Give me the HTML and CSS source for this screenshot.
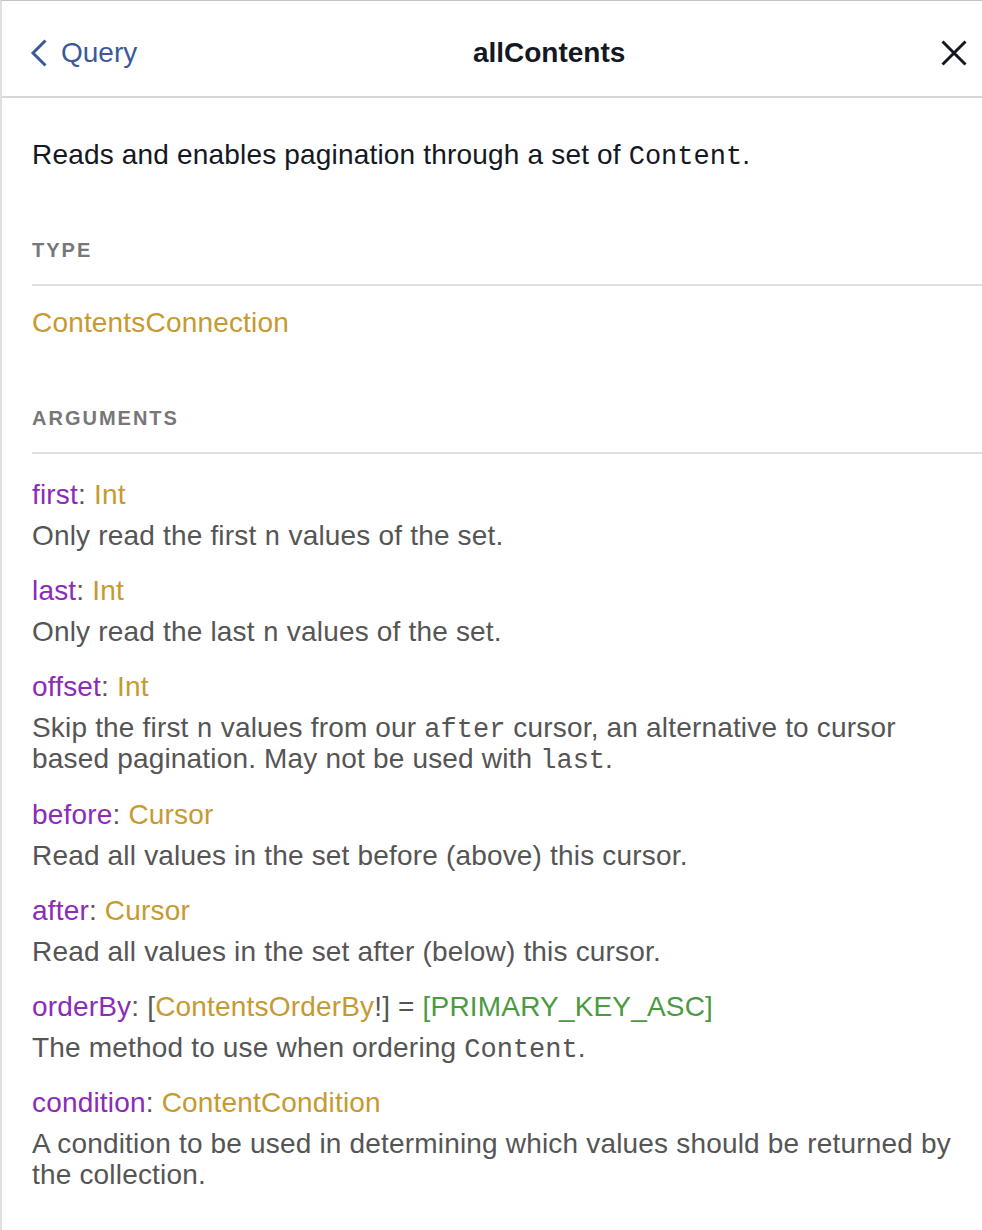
FILE: index.html
```html
<!DOCTYPE html>
<html lang="en">
<head>
<meta charset="utf-8">
<title>allContents</title>
<link rel="stylesheet" href="styles.css">
</head>
<body>
<div class="explorer">
  <div class="titlebar">
    <a class="back" href="#">
      <svg class="chev" width="18" height="28" viewBox="0 0 18 28"><path d="M15.5 1.5 L3 14 L15.5 26.5" fill="none" stroke="#3b5998" stroke-width="3"/></svg>
      <span>Query</span>
    </a>
    <div class="title">allContents</div>
    <button class="close" aria-label="Close">
      <svg width="26" height="26" viewBox="0 0 26 26"><path d="M1.5 1.5 L24.5 24.5 M24.5 1.5 L1.5 24.5" fill="none" stroke="#141823" stroke-width="3"/></svg>
    </button>
  </div>
  <div class="contents">
    <p class="main-desc">Reads and enables pagination through a set of <code>Content</code>.</p>

    <section class="category cat-type">
      <div class="cat-title">Type</div>
      <div class="type-line"><span class="type">ContentsConnection</span></div>
    </section>

    <section class="category">
      <div class="cat-title">Arguments</div>
      <div class="arg">
        <div class="arg-sig"><span class="arg-name">first</span>: <span class="type">Int</span></div>
        <div class="arg-desc">Only read the first <code>n</code> values of the set.</div>
      </div>
      <div class="arg">
        <div class="arg-sig"><span class="arg-name">last</span>: <span class="type">Int</span></div>
        <div class="arg-desc">Only read the last <code>n</code> values of the set.</div>
      </div>
      <div class="arg">
        <div class="arg-sig"><span class="arg-name">offset</span>: <span class="type">Int</span></div>
        <div class="arg-desc">Skip the first <code>n</code> values from our <code>after</code> cursor, an alternative to cursor based pagination. May not be used with <code>last</code>.</div>
      </div>
      <div class="arg">
        <div class="arg-sig"><span class="arg-name">before</span>: <span class="type">Cursor</span></div>
        <div class="arg-desc">Read all values in the set before (above) this cursor.</div>
      </div>
      <div class="arg">
        <div class="arg-sig"><span class="arg-name">after</span>: <span class="type">Cursor</span></div>
        <div class="arg-desc">Read all values in the set after (below) this cursor.</div>
      </div>
      <div class="arg">
        <div class="arg-sig"><span class="arg-name">orderBy</span>: [<span class="type">ContentsOrderBy</span>!] = <span class="default">[PRIMARY_KEY_ASC]</span></div>
        <div class="arg-desc">The method to use when ordering <code>Content</code>.</div>
      </div>
      <div class="arg">
        <div class="arg-sig"><span class="arg-name">condition</span>: <span class="type">ContentCondition</span></div>
        <div class="arg-desc">A condition to be used in determining which values should be returned by the collection.</div>
      </div>
    </section>
  </div>
</div>
</body>
</html>
```

FILE: styles.css
```css
html, body {
  margin: 0;
  padding: 0;
  background: #ffffff;
}

body {
  font-family: "Liberation Sans", Arial, Helvetica, sans-serif;
  color: #141823;
}

.explorer {
  box-sizing: border-box;
  min-height: 1230px;
  border-left: 2px solid #e0e0e0;
  border-top: 1px solid #c4c4c4;
  background: #ffffff;
}

.titlebar {
  display: flex;
  align-items: center;
  box-sizing: border-box;
  height: 97px;
  border-bottom: 2px solid #d6d6d6;
  padding: 8px 15px 0 28px;
}

.back {
  display: flex;
  align-items: center;
  gap: 13px;
  color: #3b5998;
  text-decoration: none;
  font-size: 28px;
  line-height: 32px;
}

.chev {
  display: block;
}

.title {
  flex: 1;
  text-align: center;
  font-weight: bold;
  font-size: 28px;
  line-height: 32px;
  padding-left: 20px;
  color: #141823;
}

.close {
  border: 0;
  background: none;
  padding: 0;
  margin: 0;
  display: flex;
  cursor: pointer;
}

.contents {
  padding: 41px 28px 40px 30px;
  font-size: 28px;
  letter-spacing: 0.18px;
}

code {
  font-family: "Liberation Mono", "Courier New", monospace;
  font-size: 27px;
  line-height: 0;
  letter-spacing: 0;
}

.main-desc {
  margin: 0 0 46px 0;
  line-height: 32px;
  color: #141823;
}

.cat-title {
  font-size: 20px;
  line-height: 28px;
  font-weight: bold;
  text-transform: uppercase;
  letter-spacing: 2px;
  color: #777777;
  padding: 19px 0 20px 0;
  border-bottom: 2px solid #e0e0e0;
  margin: 0 -28px 21px 0;
}

.cat-type {
  margin-bottom: 46px;
}

.type-line {
  line-height: 32px;
}

.type {
  color: #c69a30;
}

.arg-name {
  color: #8b2bb9;
}

.default {
  color: #4c9a3f;
}

.arg {
  margin-bottom: 20.2px;
}

.arg-sig {
  line-height: 40px;
  color: #555555;
}

.arg-desc {
  margin-top: 5px;
  line-height: 31px;
  color: #555555;
}
```
